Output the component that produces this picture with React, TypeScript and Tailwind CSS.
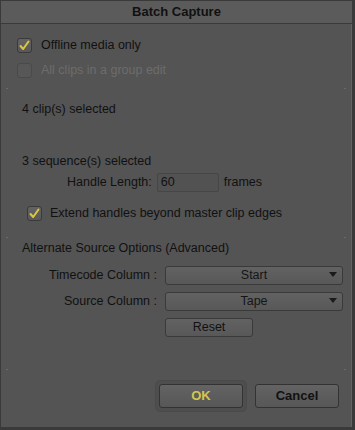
import React from 'react'

const font = { fontFamily: '"Liberation Sans", Arial, sans-serif' }

function Check({ checked, disabled }: { checked?: boolean; disabled?: boolean }) {
    return (
        <div
            className={`w-[15px] h-[15px] shrink-0 rounded-[3px] border flex items-center justify-center ${
                disabled ? 'border-[#4a4a4a] bg-[#575757]' : 'border-[#3a3a3a] bg-gradient-to-b from-[#636363] to-[#585858]'
            }`}
        >
            {checked && (
                <svg width="11" height="11" viewBox="0 0 11 11">
                    <path d="M1.5 6 L4.2 9 L9.5 1.5" fill="none" stroke="#dcc83c" strokeWidth="2" strokeLinecap="round" strokeLinejoin="round" />
                </svg>
            )}
        </div>
    )
}

function Tick() {
    return (
        <div className="flex justify-between h-[1px] px-[5px]">
            <span className="w-[2px] h-[1px] bg-[#6a6a6a]" />
            <span className="w-[2px] h-[1px] bg-[#6a6a6a]" />
        </div>
    )
}

function Select({ value }: { value: string }) {
    return (
        <div className="relative w-[178px] h-[19px] rounded-[3px] border border-[#3a3a3a] bg-gradient-to-b from-[#626262] to-[#585858] flex items-center justify-center text-[#151515]">
            {value}
            <svg className="absolute right-[5px] top-[5px]" width="8" height="5" viewBox="0 0 8 5">
                <path d="M0 0 H8 L4 5 Z" fill="#1a1a1a" />
            </svg>
        </div>
    )
}

export default function App() {
    return (
        <div
            className="w-[355px] h-[430px] bg-[#353535] border-t border-l border-r-[3px] border-b-[3px] border-[#3a3a3a] flex flex-col"
            style={font}
        >
            {/* Title bar */}
            <div className="h-[23px] shrink-0 bg-[#5b5b5b] border-b border-[#3a3a3a] flex items-center justify-center text-[13px] font-bold text-[#111]">
                Batch Capture
            </div>

            <div className="flex-1 bg-[#545454] border-r border-[#646464] flex flex-col text-[12.5px] text-[#111]">
                <div className="flex items-center h-[15px] mt-[14px] pl-[16px] gap-[9px]">
                    <Check checked />
                    <span>Offline media only</span>
                </div>
                <div className="flex items-center h-[15px] mt-[10px] pl-[16px] gap-[9px] text-[#6c6c6c]">
                    <Check disabled />
                    <span>All clips in a group edit</span>
                </div>

                <div className="mt-[10px]">
                    <Tick />
                </div>

                <div className="h-[14px] mt-[13px] pl-[21px] flex items-center">4 clip(s) selected</div>

                <div className="h-[14px] mt-[38px] pl-[21px] flex items-center">3 sequence(s) selected</div>

                <div className="flex items-center h-[19px] mt-[5px] pl-[66px]">
                    <span>Handle Length:</span>
                    <div className="ml-[5px] w-[62px] h-[19px] rounded-[2px] border border-[#464646] bg-[#525252] flex items-center pl-[3px]">
                        60
                    </div>
                    <span className="ml-[5px]">frames</span>
                </div>

                <div className="flex items-center h-[15px] mt-[14px] pl-[26px] gap-[8px]">
                    <Check checked />
                    <span>Extend handles beyond master clip edges</span>
                </div>

                <div className="mt-[16px]">
                    <Tick />
                </div>

                <div className="h-[14px] mt-[3px] pl-[21px] flex items-center">Alternate Source Options (Advanced)</div>

                <div className="flex items-center h-[19px] mt-[11px]">
                    <span className="w-[164px] text-right pr-[8px]">Timecode Column :</span>
                    <Select value="Start" />
                </div>
                <div className="flex items-center h-[19px] mt-[7px]">
                    <span className="w-[164px] text-right pr-[8px]">Source Column :</span>
                    <Select value="Tape" />
                </div>
                <div className="flex h-[19px] mt-[7px] pl-[164px]">
                    <div className="w-[88px] h-[19px] rounded-[3px] border border-[#3a3a3a] bg-gradient-to-b from-[#626262] to-[#585858] flex items-center justify-center">
                        Reset
                    </div>
                </div>

                <div className="mt-[32px]">
                    <Tick />
                </div>

                <div className="flex justify-end items-center mt-[10px] pr-[12px] gap-[8px]">
                    <div className="p-[3px] rounded-[5px] border border-[#4a4a4a] bg-[#4e4e4e]">
                        <div className="w-[84px] h-[24px] rounded-[3px] border border-[#333] bg-gradient-to-b from-[#636363] to-[#575757] flex items-center justify-center font-bold text-[13px] text-[#d6c64a]">
                            OK
                        </div>
                    </div>
                    <div className="w-[84px] h-[24px] rounded-[3px] border border-[#333] bg-gradient-to-b from-[#636363] to-[#575757] flex items-center justify-center font-bold text-[13px]">
                        Cancel
                    </div>
                </div>
            </div>
        </div>
    )
}
